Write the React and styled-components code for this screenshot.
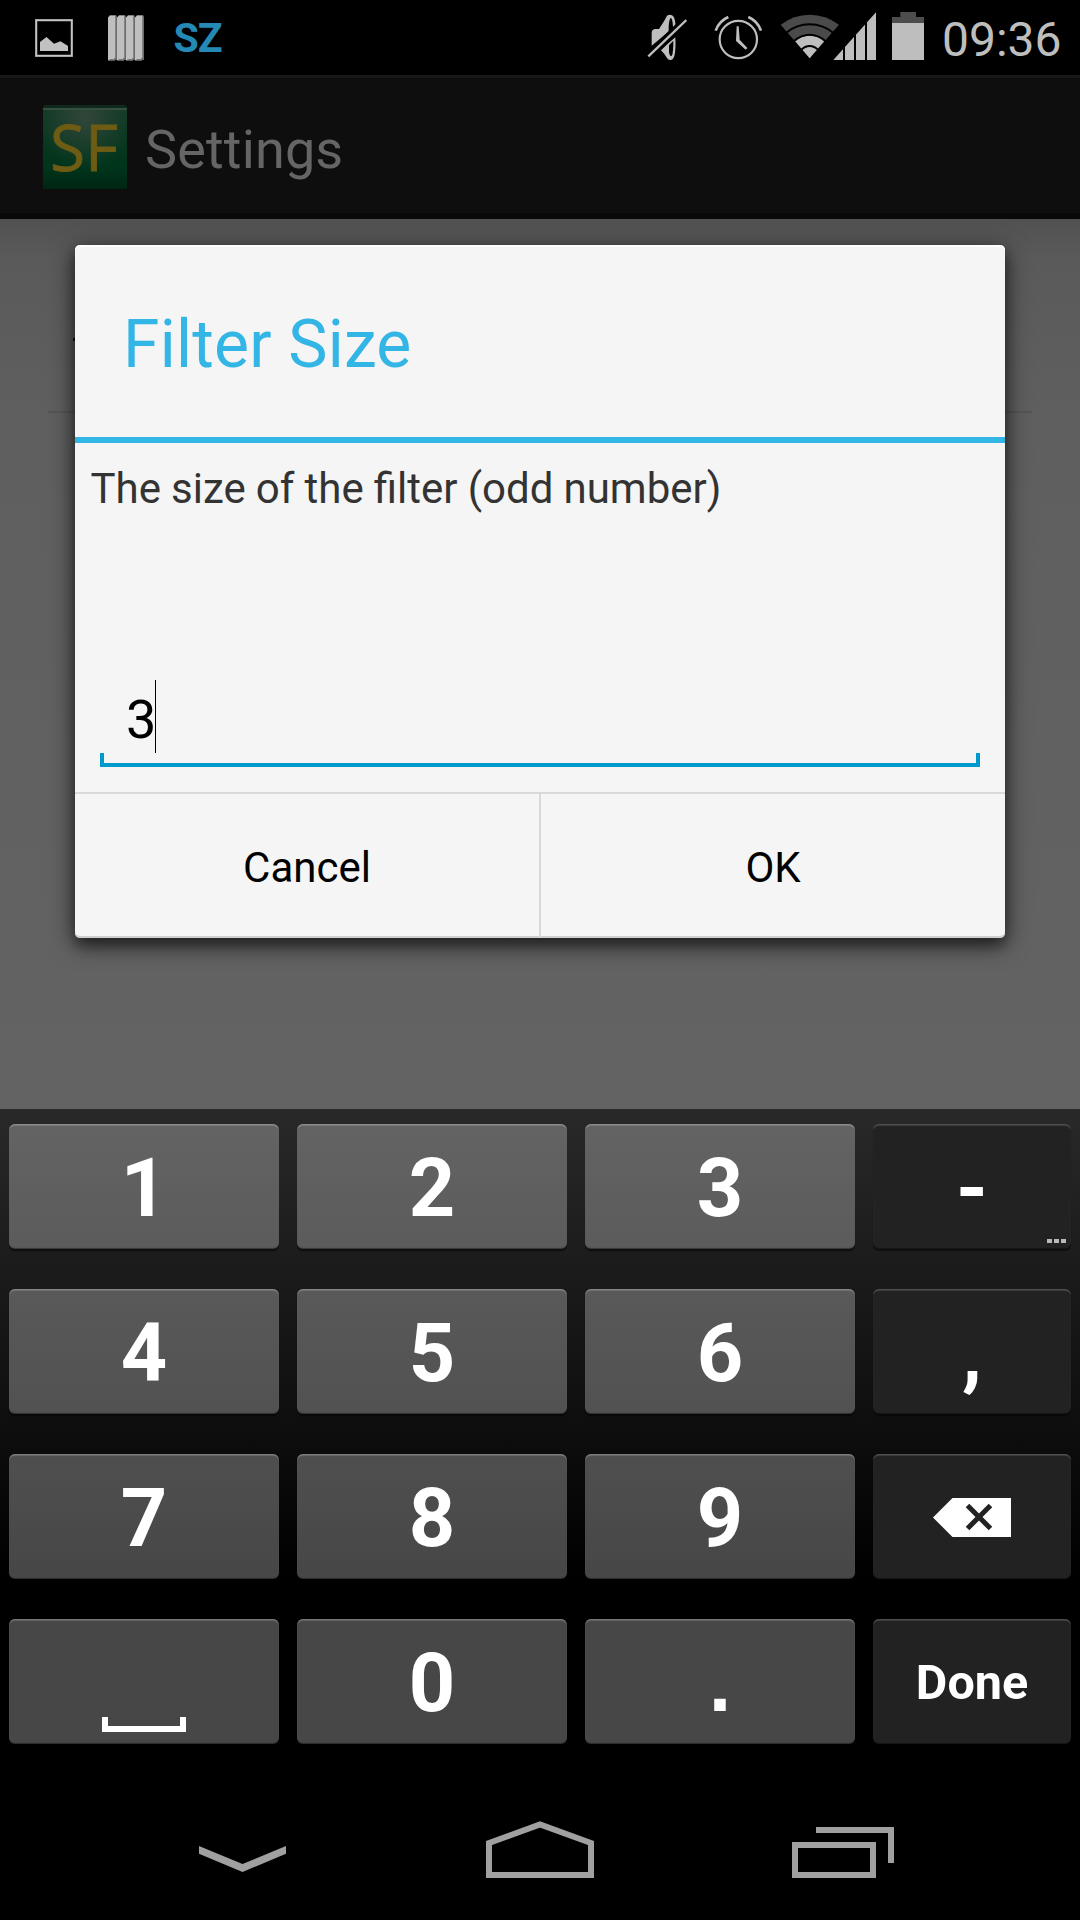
import React from "react";
import styled, { createGlobalStyle } from "styled-components";

const GlobalStyle = createGlobalStyle`
  html, body { margin: 0; padding: 0; background: #000; }
  *, *::before, *::after { box-sizing: border-box; }
`;

const Phone = styled.div`
  width: 1080px;
  height: 1920px;
  overflow: hidden;
  display: flex;
  flex-direction: column;
  background: #000;
  font-family: Roboto, "Liberation Sans", sans-serif;
`;

const StatusBar = styled.header`
  height: 75px;
  flex: none;
  display: flex;
  justify-content: space-between;
  align-items: flex-start;
  padding: 0 18px 0 35px;
  color: #bebebe;
`;

const StatusGroup = styled.div`
  display: flex;
  align-items: flex-start;
`;

const StatusIcon = styled.svg`
  display: block;
  flex: none;
  margin-top: ${(p) => p.$top}px;
  margin-left: ${(p) => p.$left || 0}px;
`;

const Ticker = styled.span`
  margin: 14px 0 0 29.5px;
  font-size: 41px;
  line-height: 48px;
  font-weight: 700;
  letter-spacing: -1px;
  color: #2489b4;
`;

const Clock = styled.span`
  width: 120px;
  margin: 12px 0 0 18px;
  font-size: 48px;
  line-height: 56px;
  white-space: nowrap;
`;

const Window = styled.section`
  position: relative;
  height: 1034px;
  flex: none;
  display: flex;
  flex-direction: column;
`;

const ActionBar = styled.div`
  height: 144px;
  flex: none;
  display: flex;
  align-items: center;
  padding: 0 43px;
  background: linear-gradient(#181818 0 3px, #0e0e0e 3px 138px, #090909 138px);
`;

const AppIcon = styled.div`
  width: 84px;
  height: 84px;
  padding-right: 2px;
  border-radius: 3px 3px 0 0;
  display: flex;
  justify-content: center;
  align-items: center;
  background:
    linear-gradient(#10291c 0 3px, #35503f 3px 5px, transparent 5px),
    radial-gradient(ellipse 48px 52px at 50% 12px, rgba(60, 74, 64, 0.75), transparent),
    linear-gradient(#123a25, #08371f 45%, #00341b 75%, #002513);
  color: #6e5c14;
  font-family: "Open Sans", "Noto Sans", sans-serif;
  font-size: 64px;
  line-height: 84px;
  -webkit-text-stroke: 0.8px #6e5c14;
`;

const ScreenTitle = styled.h1`
  margin: 5px 0 0 18px;
  font-size: 54px;
  line-height: 64px;
  font-weight: 400;
  letter-spacing: 0.15px;
  color: #656565;
`;

const SettingsList = styled.div`
  flex: 1;
  padding: 0 48px;
  background: linear-gradient(#515151, #5a5a5a 40px, #5f5f5f 200px, #636363);
`;

const SettingsRow = styled.div`
  height: 194px;
  display: flex;
  align-items: center;
  padding: 49px 25px 0;
  border-bottom: 2px solid #555;

  &::before {
    content: "";
    width: 4px;
    height: 3px;
    background: #111;
  }
`;

const Dialog = styled.div`
  position: absolute;
  left: 75px;
  top: 170px;
  width: 930px;
  height: 693px;
  display: flex;
  flex-direction: column;
  border-radius: 5px;
  background: #f5f5f5;
  box-shadow:
    0 6px 24px rgba(0, 0, 0, 0.65),
    0 8px 12px rgba(0, 0, 0, 0.3),
    inset 0 2px 0 #fdfdfd,
    inset 0 -2px 0 #cfcfcf;
`;

const DialogTitle = styled.h2`
  height: 198px;
  margin: 0;
  padding: 61px 0 0 48px;
  border-bottom: 6px solid #33b5e5;
  font-size: 66px;
  line-height: 77px;
  font-weight: 400;
  letter-spacing: 0.2px;
  color: #33b5e5;
`;

const DialogBody = styled.div`
  height: 351px;
  display: flex;
  flex-direction: column;
  justify-content: space-between;
  padding: 21px 25px 25px;
  border-bottom: 2px solid #d9d9d9;
`;

const Message = styled.p`
  margin: 0 -10px 0 -9.5px;
  font-size: 42px;
  line-height: 49px;
  word-spacing: -0.3px;
  color: #333;
  white-space: nowrap;
`;

const Field = styled.div`
  height: 87px;
  display: flex;
  flex-direction: column;
`;

const FieldValue = styled.div`
  height: 73px;
  display: flex;
  align-items: center;
  padding-left: 26px;
  font-size: 54px;
  color: #000;

  span { width: 29px; line-height: 64px; padding-top: 6px; }
`;

const Caret = styled.i`
  width: 1px;
  height: 73px;
  background: #000;
`;

const FieldLine = styled.div`
  height: 14px;
  border: 4px solid #0099cc;
  border-top: 0;
`;

const DialogActions = styled.div`
  flex: 1;
  display: grid;
  grid-template-columns: 466px 464px;
`;

const DialogButton = styled.button`
  border: 0;
  border-right: ${(p) => (p.$divided ? "2px solid #d9d9d9" : "0")};
  padding: 3px 0 0;
  background: none;
  font: 400 42px/49px Roboto, "Liberation Sans", sans-serif;
  color: #000;
`;

const Keyboard = styled.div`
  height: 667px;
  flex: none;
  display: grid;
  grid-template-columns: 270px 270px 270px 198px;
  grid-auto-rows: 125px;
  column-gap: 18px;
  row-gap: 40px;
  padding: 15px 9px 0;
  background: linear-gradient(#292929, #1c1c1c 150px, #0d0d0d 330px, #000 470px);
`;

const Key = styled.button`
  position: relative;
  display: flex;
  justify-content: center;
  align-items: ${(p) => (p.$low ? "flex-end" : "center")};
  border: 0;
  border-radius: 6px;
  padding: ${(p) => (p.$low ? "0 0 12px" : p.$label ? "2px 0 0" : p.$icon ? "1px 0 0" : "3px 0 0")};
  background: ${(p) => (p.$dark ? "#222" : "rgba(255, 255, 255, 0.278)")};
  box-shadow:
    inset 0 2px 1px -0.5px rgba(255, 255, 255, ${(p) => (p.$dark ? 0.22 : 0.28)}),
    inset 0 -2px 1px -1px rgba(0, 0, 0, 0.4),
    0 2px 1px rgba(0, 0, 0, 0.5);
  font: 700 ${(p) => (p.$label ? 48.5 : 81)}px/95px ${(p) => (p.$square ? "" : "Roboto,")} "Liberation Sans", sans-serif;
  color: #fff;
`;

const MoreDots = styled.span`
  position: absolute;
  right: 5px;
  bottom: 6px;
  display: flex;
  gap: 2px;

  i { width: 5px; height: 4px; background: #b9b9b9; }
`;

const SpaceMark = styled.span`
  width: 84px;
  height: 15px;
  border: 6px solid #fff;
  border-top: 0;
`;

const NavBar = styled.nav`
  height: 144px;
  flex: none;
  display: flex;
  align-items: flex-start;
  padding: 45px 186px 0 199px;
  justify-content: space-between;
`;

const NavIcon = styled.svg`
  display: block;
  margin-top: ${(p) => p.$top || 0}px;
  margin-left: ${(p) => p.$left || 0}px;
`;

const keys = [
  { text: "1" }, { text: "2" }, { text: "3" }, { text: "-", dark: true, more: true },
  { text: "4" }, { text: "5" }, { text: "6" }, { text: ",", dark: true },
  { text: "7" }, { text: "8" }, { text: "9" }, { icon: "delete", dark: true },
  { icon: "space" }, { text: "0" }, { text: ".", square: true }, { text: "Done", dark: true, label: true },
];

const DeleteIcon = () => (
  <svg width="78" height="39" viewBox="0 0 78 39">
    <path d="M0 19.5 19.5 0H78V39H19.5Z" fill="#fff" />
    <path d="M34.500 7.500 57.500 30.500M57.500 7.500 34.500 30.500" stroke="#222" strokeWidth="5" />
  </svg>
);

const PictureIcon = () => (
  <StatusIcon $top={19} width="38" height="38" viewBox="0 0 38 38">
    <rect x="1.2" y="1.2" width="35.6" height="35.6" fill="none" stroke="#777" strokeWidth="2.4" />
    <rect x="1.2" y="1.2" width="35.6" height="35.6" fill="none" stroke="#c4c4c4" strokeWidth="1.6" />
    <path d="M5 32V23L11.5 18 19 24.8 25.5 22.2 33 27V32Z" fill="#c1c1c1" />
  </StatusIcon>
);

const BooksIcon = () => (
  <StatusIcon $top={15} $left={35} width="36" height="46" viewBox="0 0 36 46">
    {[0, 9, 18, 27].map((x) => (
      <g key={x} transform={`translate(${x} 0)`}>
        <path d="M2 0H8L9 2V45H7V2L0 2.5Z" fill="#6c6c6c" />
        <path d="M0 2.5 2 .8H7.3V43L6 44 0 45.5Z" fill="#bfbfbf" />
        <path d="M0 45.7 2 44H7V45.7Z" fill="#777" />
      </g>
    ))}
  </StatusIcon>
);

const MuteIcon = () => (
  <StatusIcon $top={14} width="40" height="47" viewBox="81 42 120 141">
    <path d="M95 137V100q0-12 10-13h12l15-23 9-17q4-3 10-3q7 0 11 8q4 10 5 25L95 137Z" fill="#bebebe" />
    <path d="M123 151 140 134 166 112Q168 150 163 168Q159 180 152 180Q145 181 141 174L133 162Z" fill="#bebebe" />
    <path d="M152 53Q158 54 159 84L146 97Q145 62 152 53ZM147 136 160 122Q160 158 156 166Q151 174 147 157Z" fill="#000" />
    <path d="M82 163 196 53" stroke="#000" strokeWidth="12" />
    <path d="M85 169 199 60" stroke="#bebebe" strokeWidth="7" />
  </StatusIcon>
);

const AlarmIcon = () => (
  <StatusIcon $top={15} $left={27} width="49" height="45" viewBox="282 45 147 135">
    <circle cx="355" cy="118.500" r="56" fill="none" stroke="#bebebe" strokeWidth="6.500" />
    <path d="M287 92Q297 63 325 51M423 92Q413 63 385 51" fill="none" stroke="#bebebe" strokeWidth="8" />
    <path d="M350 79H356L359 119 382 144 377 149 348 123Z" fill="#bebebe" />
  </StatusIcon>
);

const WifiIcon = () => (
  <StatusIcon $top={14} $left={17} width="60" height="45" viewBox="480 42 180 135">
    <path d="M569 175 482 74Q521 44 569 44T657 74Z" fill="#4a4a4a" />
    <path d="M569 175 525 123Q546 107 569 107T613 123Z" fill="#bebebe" />
    <path d="M499 98Q530 73 569 73T639 98M521 124Q543 104 569 104T617 124M543 150Q555 138 569 138T595 150" fill="none" stroke="#000" strokeWidth="6" />
  </StatusIcon>
);

const SignalIcon = () => (
  <StatusIcon $top={12} $left={-7} width="44" height="48" viewBox="639 36 132 144">
    <path d="M640 180 768 37V180Z" fill="#bebebe" />
    <path d="M672 130V180M705 90V180M738 55V180" stroke="#000" strokeWidth="6" />
  </StatusIcon>
);

const BatteryIcon = () => (
  <StatusIcon $top={12} $left={15} width="32" height="48" viewBox="816 36 96 144">
    <path d="M816 69V51H841V36H888V51H912V69Z" fill="#4d4d4d" />
    <rect x="816" y="69" width="96" height="111" fill="#bebebe" />
  </StatusIcon>
);

export default function App() {
  return (
    <>
      <GlobalStyle />
      <Phone>
        <StatusBar>
          <StatusGroup>
            <PictureIcon />
            <BooksIcon />
            <Ticker>SZ</Ticker>
          </StatusGroup>
          <StatusGroup>
            <MuteIcon />
            <AlarmIcon />
            <WifiIcon />
            <SignalIcon />
            <BatteryIcon />
            <Clock>09:36</Clock>
          </StatusGroup>
        </StatusBar>

        <Window>
          <ActionBar>
            <AppIcon>SF</AppIcon>
            <ScreenTitle>Settings</ScreenTitle>
          </ActionBar>
          <SettingsList>
            <SettingsRow />
          </SettingsList>
          <Dialog role="dialog">
            <DialogTitle>Filter Size</DialogTitle>
            <DialogBody>
              <Message>The size of the filter (odd number)</Message>
              <Field>
                <FieldValue>
                  <span>3</span>
                  <Caret />
                </FieldValue>
                <FieldLine />
              </Field>
            </DialogBody>
            <DialogActions>
              <DialogButton $divided>Cancel</DialogButton>
              <DialogButton>OK</DialogButton>
            </DialogActions>
          </Dialog>
        </Window>

        <Keyboard>
          {keys.map((k) => (
            <Key
              key={k.text || k.icon}
              $dark={k.dark}
              $label={k.label}
              $square={k.square}
              $icon={k.icon === "delete"}
              $low={k.icon === "space"}
            >
              {k.text}
              {k.icon === "delete" && <DeleteIcon />}
              {k.icon === "space" && <SpaceMark />}
              {k.more && (
                <MoreDots>
                  <i />
                  <i />
                  <i />
                </MoreDots>
              )}
            </Key>
          ))}
        </Keyboard>

        <NavBar>
          <NavIcon $top={25} width="87" height="26" viewBox="0 0 87 26">
            <path d="M0 0 43.500 18 87 0V7.700L43.500 26 0 7.700Z" fill="#a0a0a0" />
          </NavIcon>
          <NavIcon $left={2} width="108" height="57" viewBox="0 0 108 57">
            <path d="M3 54V22L54 3.500 105 22V54Z" fill="none" stroke="#a0a0a0" strokeWidth="6" />
          </NavIcon>
          <NavIcon $top={6} width="102" height="51" viewBox="0 0 102 51">
            <path d="M3 18H81V48H3ZM24 3H99V36" fill="none" stroke="#a0a0a0" strokeWidth="6" />
          </NavIcon>
        </NavBar>
      </Phone>
    </>
  );
}
